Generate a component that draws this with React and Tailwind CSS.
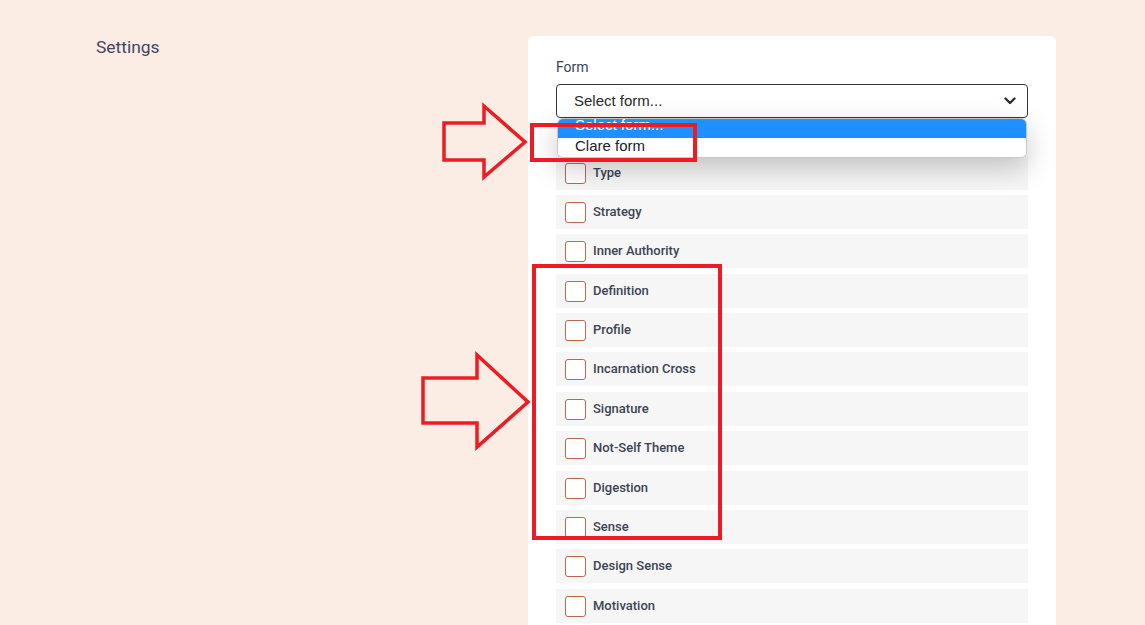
import React from "react";

const items = [
  { t: "Type", m: "mt-0" },
  { t: "Strategy", m: "mt-[5px]" },
  { t: "Inner Authority", m: "mt-[5px]" },
  { t: "Definition", m: "mt-[6px]" },
  { t: "Profile", m: "mt-[5px]" },
  { t: "Incarnation Cross", m: "mt-[5px]" },
  { t: "Signature", m: "mt-[6px]" },
  { t: "Not-Self Theme", m: "mt-[5px]" },
  { t: "Digestion", m: "mt-[6px]" },
  { t: "Sense", m: "mt-[5px]" },
  { t: "Design Sense", m: "mt-[5px]" },
  { t: "Motivation", m: "mt-[6px]" },
];

export default function App() {
  return (
    <div className="relative h-[625px] w-full overflow-hidden bg-[#fcede4]" style={{ fontFamily: "Roboto, 'Liberation Sans', sans-serif" }}>
      <div className="flex">
        <div className="w-[528px] shrink-0 pl-[96px] pt-[37px]">
          <h1 className="text-[17.4px] leading-[20px] text-[#3d4663]">Settings</h1>
        </div>
        <div className="mt-[36px] w-[528px] shrink-0 rounded-[6px] bg-white px-[28px] pt-[21px] pb-[20px]">
          <label className="block text-[14px] leading-[20px] text-[#3b4252]">Form</label>
          <div className="relative mt-[7px]">
            <div className="flex h-[34px] items-center justify-between rounded-[4px] border border-[#2f3542] pl-[17px] pr-[10px]">
              <span className="text-[15px] text-[#2a2a2a]" style={{ fontFamily: "'Liberation Sans', Arial, sans-serif" }}>Select form...</span>
              <svg width="12" height="8" viewBox="0 0 12 8" className="mr-[1px]">
                <path d="M1.5 1.5 L6 6 L10.5 1.5" fill="none" stroke="#2a2f3a" strokeWidth="2.4" strokeLinecap="round" strokeLinejoin="round" />
              </svg>
            </div>
            <div className="absolute left-[1px] right-[1px] top-[34px] z-10 overflow-hidden rounded-[6px] border border-[#c8c8c8] bg-white shadow-[0_10px_28px_rgba(0,0,0,0.22)]" style={{ fontFamily: "'Liberation Sans', Arial, sans-serif" }}>
              <div className="h-[19px] overflow-hidden bg-[#1e90ff] pl-[17px] text-[15px] leading-[19px] text-white">
                <div className="-mt-[4px]">Select form...</div>
              </div>
              <div className="h-[19px] pl-[17px] text-[15px] leading-[16px] text-[#222]">Clare form</div>
            </div>
          </div>
          <div className="mt-[38px] flex flex-col">
            {items.map(({ t, m }) => (
              <div key={t} className={`${m} flex h-[34px] items-center bg-[#f6f6f6] pl-[9px]`}>
                <span className="h-[21px] w-[21px] rounded-[3px] border border-[#b86a50] bg-white" />
                <span className="ml-[7px] text-[13px] font-medium text-[#3c4454]">{t}</span>
              </div>
            ))}
          </div>
        </div>
      </div>
      <svg className="pointer-events-none absolute left-0 top-0 z-20" width="1145" height="625">
        <g fill="none" stroke="#ed1c24" strokeWidth="3.5" strokeLinejoin="miter">
          <polygon points="444,123 484,123 484,106 525,142 484,177 484,160 444,160" />
          <polygon points="423,378 477,378 477,355 528,402 477,447 477,423 423,423" />
          <rect x="532" y="125" width="163" height="35" strokeWidth="4" />
          <rect x="534" y="266" width="186" height="272" strokeWidth="4" />
        </g>
      </svg>
    </div>
  );
}
